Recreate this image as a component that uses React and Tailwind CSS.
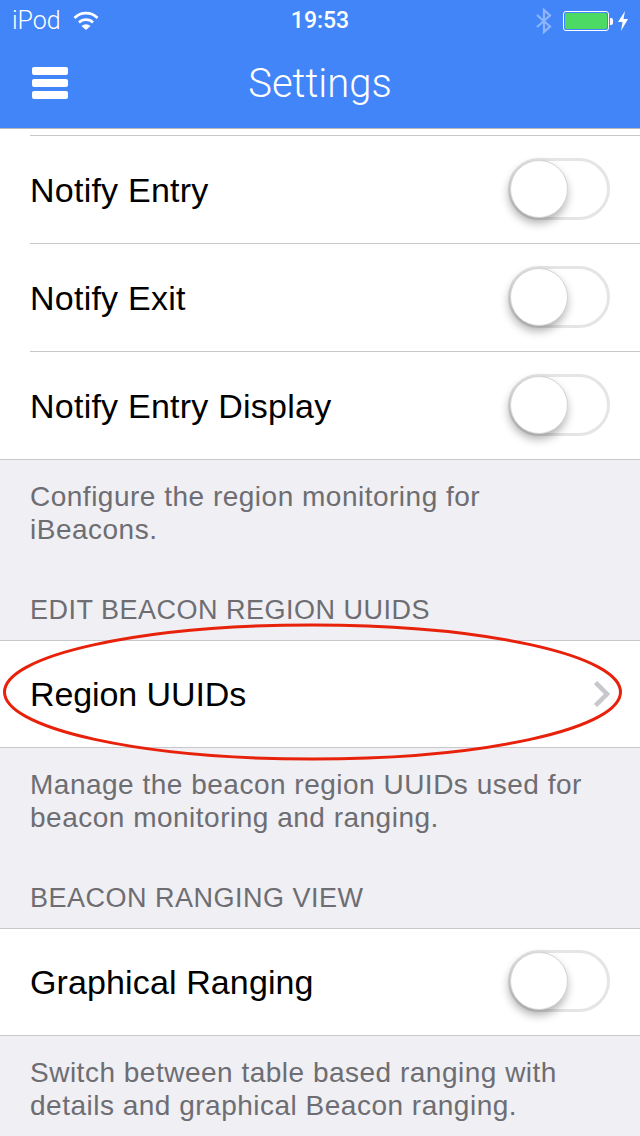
import React from 'react';

const font = { fontFamily: '"Liberation Sans", Arial, sans-serif' };

const Toggle = () => (
  <div className="relative mt-[-2px] w-[102px] h-[62px] rounded-full border-[3px] border-[#e5e5e5] bg-white">
    <div className="absolute left-[-1px] top-[-1px] w-[58px] h-[58px] rounded-full bg-white border border-[#d4d4d4] shadow-[-1px_5px_10px_rgba(0,0,0,0.32)]"></div>
  </div>
);

const Row = ({ label, right, inset, h = 'h-[107px]', labelClass = 'tracking-[0.24px] mt-[2px]' }) => (
  <div className={`${h} flex items-center justify-between pr-[30px] ${inset ? 'border-b border-[#c8c7cc]' : ''}`}>
    <span className={`text-[34px] text-black ${labelClass}`}>{label}</span>
    {right}
  </div>
);

const Chevron = () => (
  <svg width="16" height="26" viewBox="0 0 16 26">
    <path d="M1.5 1.5 L13 13 L1.5 24.5" fill="none" stroke="#c7c7cc" strokeWidth="4.5" />
  </svg>
);

const SectionHeader = ({ children, h }) => (
  <div className={`${h} bg-[#efeff4] border-b border-[#c8c7cc] px-[30px] flex items-end pb-[14px] text-[27px] leading-[32px] tracking-[0.5px] text-[#6d6d72]`}>
    {children}
  </div>
);

const Footer = ({ lines, h }) => (
  <div className={`${h} bg-[#efeff4] px-[30px] pt-[20px] text-[28px] leading-[33px] tracking-[0.5px] text-[#6d6d72]`}>
    {lines.map((l) => (
      <div key={l}>{l}</div>
    ))}
  </div>
);

export default function App() {
  return (
    <div className="relative w-[640px] h-[1136px] overflow-hidden bg-white" style={font}>
      {/* nav bar */}
      <div className="h-[129px] bg-[#4285f9] border-b border-[#b8b8b8] text-white">
        <div className="h-[40px] pt-[2px] flex items-center justify-between pl-[12px] pr-[12px] relative">
          <div className="flex items-center gap-[12px] text-[25px] font-light font-['Roboto']">
            <span>iPod</span>
            <svg width="26" height="20" viewBox="0 0 26 20" fill="none" stroke="white" strokeWidth="2.6">
              <path d="M1.5 7 A16 16 0 0 1 24.5 7" />
              <path d="M6 11.5 A10 10 0 0 1 20 11.5" />
              <path d="M13 19 L8.5 15 A6.5 6.5 0 0 1 17.5 15 Z" fill="white" stroke="none" />
            </svg>
          </div>
          <span className="absolute left-0 right-0 text-center text-[23px] font-medium font-['Roboto']">19:53</span>
          <div className="flex items-center">
            <svg width="18" height="26" viewBox="0 0 18 26" fill="none" stroke="#8fb5fb" strokeWidth="2.2" className="mr-[10px]">
              <path d="M2 7 L15 18.5 L9 24 L9 2 L15 7.5 L2 19" />
            </svg>
            <div className="w-[46px] h-[20px] rounded-[3px] border border-white p-[1px]">
              <div className="w-full h-full rounded-[2px] bg-[#4cd964]"></div>
            </div>
            <div className="w-[3px] h-[7px] bg-white rounded-r-[2px] ml-[1px] mr-[5px]"></div>
            <svg width="10" height="20" viewBox="0 0 10 20" fill="white">
              <path d="M7 0 L0 11 L4.5 11 L3 20 L10 8 L5.5 8 Z" />
            </svg>
          </div>
        </div>
        <div className="h-[88px] relative flex items-center justify-center">
          <div className="absolute left-[32px] top-[27px] w-[36px] flex flex-col gap-[4px]">
            <div className="h-[8px] rounded-[2px] bg-white"></div>
            <div className="h-[8px] rounded-[2px] bg-white"></div>
            <div className="h-[8px] rounded-[2px] bg-white"></div>
          </div>
          <span className="text-[40px] font-light leading-none font-['Roboto']">Settings</span>
        </div>
      </div>

      {/* first group */}
      <div className="h-[6px] bg-white"></div>
      <div className="h-px ml-[30px] bg-[#c8c7cc]"></div>
      <div className="pl-[30px] bg-white">
        <Row label="Notify Entry" right={<Toggle />} inset h="h-[108px]" />
        <Row label="Notify Exit" right={<Toggle />} inset h="h-[108px]" />
        <Row label="Notify Entry Display" right={<Toggle />} />
      </div>
      <div className="h-px bg-[#c8c7cc]"></div>
      <Footer lines={['Configure the region monitoring for', 'iBeacons.']} h="h-[100px]" />
      <SectionHeader h="h-[81px]">EDIT BEACON REGION UUIDS</SectionHeader>

      {/* second group */}
      <div className="pl-[30px] bg-white">
        <Row label="Region UUIDs" right={<Chevron />} h="h-[106px]" labelClass="tracking-[-0.1px]" />
      </div>
      <div className="h-px bg-[#c8c7cc]"></div>
      <Footer lines={['Manage the beacon region UUIDs used for', 'beacon monitoring and ranging.']} h="h-[100px]" />
      <SectionHeader h="h-[81px]">BEACON RANGING VIEW</SectionHeader>

      {/* third group */}
      <div className="pl-[30px] bg-white">
        <Row label="Graphical Ranging" right={<Toggle />} h="h-[106px]" labelClass="tracking-[0.12px]" />
      </div>
      <div className="h-px bg-[#c8c7cc]"></div>
      <Footer lines={['Switch between table based ranging with', 'details and graphical Beacon ranging.']} h="h-[100px]" />

      {/* red annotation */}
      <svg width="640" height="160" viewBox="0 0 640 160" className="absolute left-0 top-[612px]" fill="none">
        <ellipse cx="312.5" cy="80" rx="308" ry="67" stroke="#e8210a" strokeWidth="3" />
      </svg>
    </div>
  );
}
